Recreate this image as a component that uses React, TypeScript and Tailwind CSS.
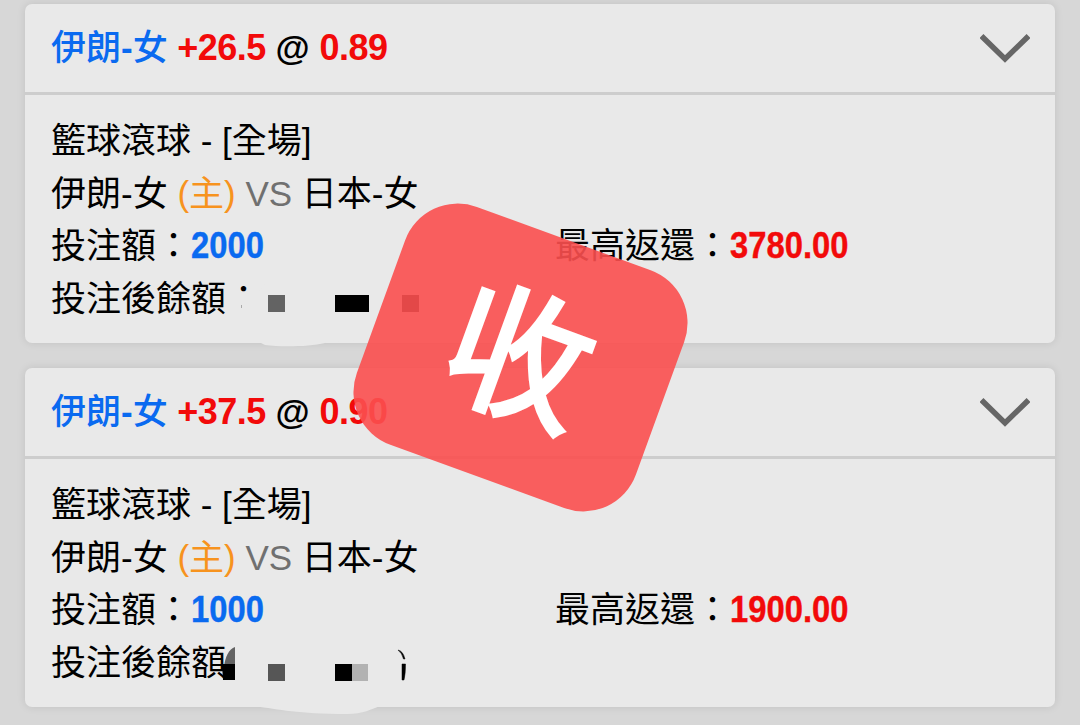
import type { ReactNode } from 'react'

interface Bet {
  id: number
  handicap: string
  odds: string
  stake: string
  maxReturn: string
  balance: string
  mask: ReactNode
}

// Hand-painted cover over the balance, in card coordinates
const firstMask = (
  <>
    <path d="M215 290 L232 290 L242 278 L400 278 L400 330 L300 339 C284 343 254 343 240 341 L232 337 L215 322 Z" fill="#e9e9e9" />
    <rect x="216" y="301" width="1" height="3" fill="#aaa" />
    <rect x="243" y="291" width="17" height="17" fill="#636363" />
    <rect x="310" y="291" width="34" height="17" fill="#000" />
    <rect x="377" y="291" width="17" height="17" fill="#111" />
  </>
)

const secondMask = (
  <>
    <path d="M227 338 C255 341 270 346 322 346 C338 346 347 341 355 338 Z" fill="#e9e9e9" />
    <path d="M199 299 C200 289 204 281 210 279 L210 299 Z" fill="#636363" />
    <path d="M197 296 L210 296 L210 312 L198 312 Z" fill="#000" />
    <rect x="243" y="296" width="17" height="17" fill="#565656" />
    <rect x="310" y="296" width="17" height="17" fill="#000" />
    <rect x="327" y="296" width="16" height="17" fill="#b2b2b2" />
    <path d="M373 282 Q378 283 380 291 L378.5 291 Q377 285 373 282 Z M377 296 L380.5 296 Q380.5 306 379 312 L377 312 Z" fill="#000" stroke="#000" strokeWidth="0.5" />
  </>
)

const bets: Bet[] = [
  { id: 1, handicap: '+26.5', odds: '0.89', stake: '2000', maxReturn: '3780.00', balance: '投注後餘額：', mask: firstMask },
  { id: 2, handicap: '+37.5', odds: '0.90', stake: '1000', maxReturn: '1900.00', balance: '投注後餘額', mask: secondMask },
]

function Chevron() {
  return (
    <svg width="50" height="30" viewBox="0 0 50 30" fill="none">
      <path d="M1.5 3 L25 26 L48.5 3" stroke="#666" strokeWidth="5.5" />
    </svg>
  )
}

function BetCard({ bet }: { bet: Bet }) {
  return (
    <section className="relative h-[339px] rounded-[7px] bg-[#e9e9e9] shadow-[0_0_8px_rgba(0,0,0,0.10)]">
      <header className="flex h-[91px] items-center justify-between border-b-[3px] border-[#cdcdcd] pl-[26px] pr-[25px]">
        <h2 className="font-bold whitespace-pre">
          <span className="font-medium text-[#0a6af0]">伊朗</span>
          <span className="text-[#0a6af0]">-</span>
          <span className="font-medium text-[#0a6af0]">女</span>
          <span className="text-[36px] tracking-[-0.5px] text-[#f20a0a]"> {bet.handicap}</span>
          <span> @ </span>
          <span className="text-[36px] tracking-[-0.5px] text-[#f20a0a]">{bet.odds}</span>
        </h2>
        <Chevron />
      </header>
      <div className="px-[26px] pt-5">
        <p>籃球滾球 - [全場]</p>
        <p>
          伊朗-女 <span className="text-[#f7931e]">(主)</span> <span className="text-[#707070]">VS</span> 日本-女
        </p>
        <div className="grid grid-cols-[504px_1fr]">
          <p>
            投注額：
            <span className="inline-block origin-left scale-x-[0.91] text-[36px] leading-none font-bold text-[#0a6af0] [-webkit-text-stroke:0.4px_#0a6af0]">{bet.stake}</span>
          </p>
          <p>
            最高返還：
            <span className="inline-block origin-left scale-x-[0.91] text-[36px] leading-none font-bold text-[#f20a0a] [-webkit-text-stroke:0.4px_#f20a0a]">{bet.maxReturn}</span>
          </p>
        </div>
        <p>{bet.balance}</p>
      </div>
      <svg className="absolute left-0 top-0 overflow-visible" width="1030" height="339" viewBox="0 0 1030 339">
        {bet.mask}
      </svg>
    </section>
  )
}

export default function App() {
  return (
    <main className="relative flex h-[725px] w-[1080px] flex-col gap-[25px] overflow-hidden bg-[#d7d7d7] px-[25px] pt-1 font-['Liberation_Sans','Noto_Sans_CJK_TC',sans-serif] text-[35px] leading-[52.5px] text-black">
      {bets.map((bet) => (
        <BetCard key={bet.id} bet={bet} />
      ))}
      {/* Result stamp */}
      <div className="absolute left-[372px] top-[230.5px] flex h-[253px] w-[297px] rotate-20 items-center justify-center rounded-[56px] bg-[#fb4f4f]/90">
        <span className="relative -top-[10px] -left-[1px] font-['Noto_Sans_CJK_TC',sans-serif] text-[143px] leading-none font-normal text-white [-webkit-text-stroke:4px_white]">收</span>
      </div>
    </main>
  )
}
